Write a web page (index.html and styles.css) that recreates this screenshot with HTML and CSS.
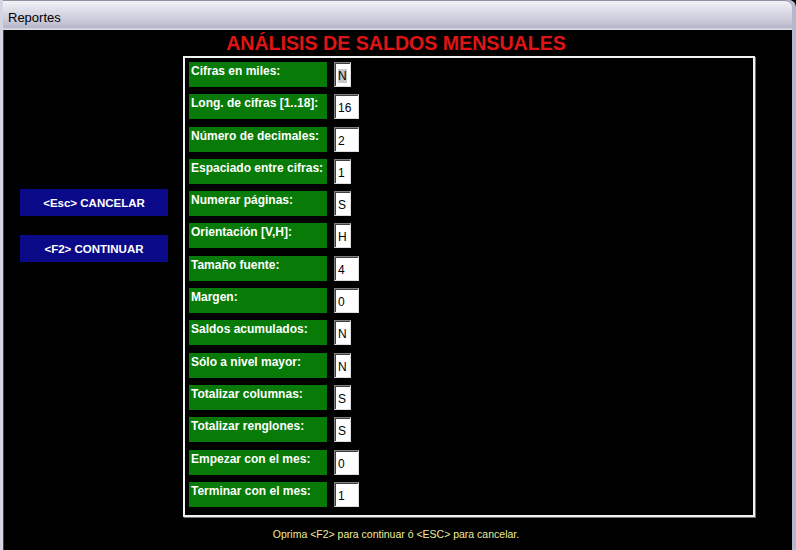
FILE: index.html
```html
<!DOCTYPE html>
<html lang="es">
<head>
    <meta charset="UTF-8">
    <title>Reportes</title>
    <link rel="stylesheet" href="styles.css">
</head>
<body>
    <div class="window">
        <div class="titlebar">Reportes</div>
        <div class="content">
            <h1 class="heading">ANÁLISIS DE SALDOS MENSUALES</h1>
            <div class="main">
                <div class="actions">
                    <button class="btn">&lt;Esc&gt; CANCELAR</button>
                    <button class="btn">&lt;F2&gt; CONTINUAR</button>
                </div>
                <div class="panel">
                    <div class="row"><div class="label">Cifras en miles:</div><div class="field"><span class="sel">N</span></div></div>
                    <div class="row"><div class="label">Long. de cifras [1..18]:</div><div class="field wide">16</div></div>
                    <div class="row"><div class="label">Número de decimales:</div><div class="field wide">2</div></div>
                    <div class="row"><div class="label">Espaciado entre cifras:</div><div class="field">1</div></div>
                    <div class="row"><div class="label">Numerar páginas:</div><div class="field">S</div></div>
                    <div class="row"><div class="label">Orientación [V,H]:</div><div class="field">H</div></div>
                    <div class="row"><div class="label">Tamaño fuente:</div><div class="field wide">4</div></div>
                    <div class="row"><div class="label">Margen:</div><div class="field wide">0</div></div>
                    <div class="row"><div class="label">Saldos acumulados:</div><div class="field">N</div></div>
                    <div class="row"><div class="label">Sólo a nivel mayor:</div><div class="field">N</div></div>
                    <div class="row"><div class="label">Totalizar columnas:</div><div class="field">S</div></div>
                    <div class="row"><div class="label">Totalizar renglones:</div><div class="field">S</div></div>
                    <div class="row"><div class="label">Empezar con el mes:</div><div class="field wide">0</div></div>
                    <div class="row"><div class="label">Terminar con el mes:</div><div class="field wide">1</div></div>
                </div>
            </div>
            <p class="hint">Oprima &lt;F2&gt; para continuar ó &lt;ESC&gt; para cancelar.</p>
        </div>
    </div>
</body>
</html>
```

FILE: styles.css
```css
* {
    margin: 0;
    padding: 0;
    box-sizing: border-box;
}
body {
    font-family: 'Liberation Sans', Arial, sans-serif;
    background: #000;
    width: 796px;
    height: 550px;
    overflow: hidden;
}
.window {
    width: 796px;
    height: 550px;
    display: flex;
    flex-direction: column;
    background: #c4c4d6;
    border-left: 3px solid #d4d4e2;
    border-right: 4px solid #b8b8cc;
    border-top-right-radius: 7px;
}
.titlebar {
    height: 30px;
    padding: 9px 0 0 5px;
    font-size: 13px;
    color: #000;
    background: linear-gradient(#f2f2f7, #dcdce8 35%, #c2c2d4 80%, #b4b4c8 90%, #e4e4ee);
    border-top: 1px solid #9090a4;
    border-top-right-radius: 7px;
}
.content {
    flex: 1;
    background: #000;
    border-left: 1px solid #404048;
    display: flex;
    flex-direction: column;
}
.heading {
    height: 26px;
    padding-top: 3px;
    margin-left: -4px;
    text-align: center;
    font-size: 19.6px;
    font-weight: bold;
    color: #e01414;
    line-height: 20px;
}
.main {
    display: flex;
}
.actions {
    width: 179px;
    padding: 133px 0 0 16px;
    display: flex;
    flex-direction: column;
    gap: 19px;
}
.btn {
    width: 148px;
    height: 27px;
    background: #0a0a88;
    color: #fff;
    border: none;
    font-family: 'Liberation Sans', Arial, sans-serif;
    font-size: 11.5px;
    font-weight: bold;
}
.panel {
    width: 572px;
    height: 461px;
    border: 2px solid #f2f2f2;
    box-shadow: 1px 1px 0 #707070;
    padding: 4px 0 0 4px;
    display: flex;
    flex-direction: column;
    gap: 7.3px;
}
.row {
    display: flex;
    gap: 7px;
    height: 25px;
}
.label {
    width: 138px;
    background: #077a07;
    color: #fff;
    font-size: 12px;
    font-weight: bold;
    padding: 2px 0 0 2px;
    white-space: nowrap;
}
.field {
    width: 17px;
    height: 25px;
    background: #fff;
    border-top: 1px solid #808080;
    border-left: 1px solid #808080;
    border-right: 1px solid #dcdcdc;
    border-bottom: 1px solid #dcdcdc;
    box-shadow: inset 1px 1px 0 #404040;
    font-size: 12px;
    color: #000;
    padding: 6px 0 0 3px;
}
.field.wide {
    width: 25px;
}
.sel {
    background: #c8c8c8;
}
.hint {
    text-align: center;
    margin: 11px 0 0 -4px;
    font-size: 10.5px;
    color: #ecec9c;
}
```
